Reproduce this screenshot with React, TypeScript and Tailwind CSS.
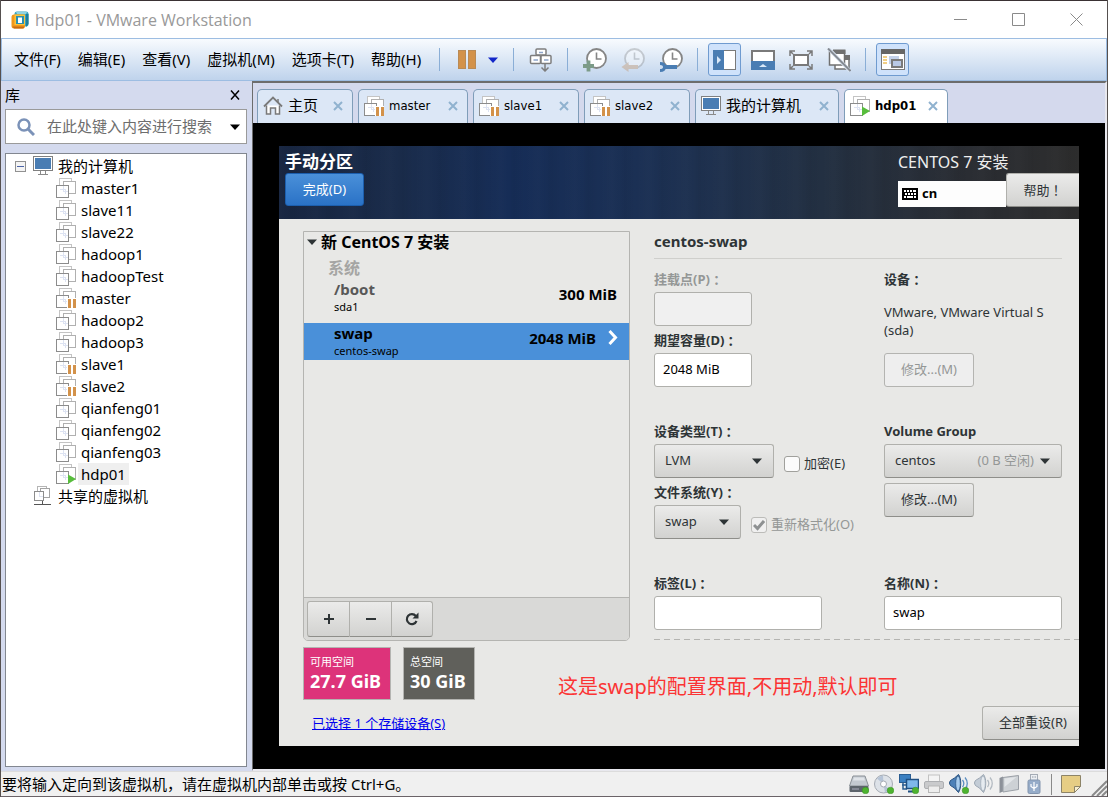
import type { ReactNode } from 'react';

type VmState = 'off' | 'paused' | 'running';

const menus = ['文件(F)', '编辑(E)', '查看(V)', '虚拟机(M)', '选项卡(T)', '帮助(H)'];

const machines: { name: string; state: VmState }[] = [
  { name: 'master1', state: 'off' },
  { name: 'slave11', state: 'off' },
  { name: 'slave22', state: 'off' },
  { name: 'hadoop1', state: 'off' },
  { name: 'hadoopTest', state: 'off' },
  { name: 'master', state: 'paused' },
  { name: 'hadoop2', state: 'off' },
  { name: 'hadoop3', state: 'off' },
  { name: 'slave1', state: 'paused' },
  { name: 'slave2', state: 'paused' },
  { name: 'qianfeng01', state: 'off' },
  { name: 'qianfeng02', state: 'off' },
  { name: 'qianfeng03', state: 'off' },
  { name: 'hdp01', state: 'running' },
];

/* ---------- icons ---------- */

function VmwareLogo() {
  return (
    <svg width="18" height="18" viewBox="0 0 18 18" fill="none">
      <rect x="3.5" y="0.5" width="14" height="15" rx="2.5" fill="#3aa3bd" />
      <path d="M5 1h11l-1 2H6z" fill="#8fd3e2" />
      <path d="M15 3h2.500v10l-2.500 3z" fill="#1f7d9c" />
      <rect x="0.500" y="3.500" width="13.500" height="14" rx="2.500" fill="#f0981c" />
      <path d="M1.500 15.500h12l-1 2H3z" fill="#c76a12" />
      <rect x="3.500" y="3.500" width="10.500" height="10.500" fill="#fbc23a" />
      <rect x="5" y="5" width="8" height="8" fill="#2a8fae" />
      <rect x="7" y="6.500" width="4" height="5.500" fill="#fff" />
    </svg>
  );
}

function VmIcon({ state }: { state: VmState }) {
  return (
    <svg width="20" height="20" viewBox="0 0 20 20" fill="none" shapeRendering="crispEdges">
      <rect x="3.500" y="0.500" width="12" height="12" fill="#fff" stroke="#c4c4c4" />
      <rect x="7.500" y="3.500" width="12" height="12" fill="#fff" stroke="#b0b0b0" />
      <rect x="0.500" y="7.500" width="12" height="12" fill="#fff" stroke="#8c8c8c" />
      <path d="M7.500 8v5.500H12M4 11.500h5.500V16" stroke="#dde3f2" />
      {state === 'paused' && (
        <>
          <rect x="11" y="10" width="9" height="10" fill="#fff" />
          <path d="M12 11h3v9h-3zM17 11h3v9h-3z" fill="#d3924a" />
        </>
      )}
      {state === 'running' && (
        <path d="M12 10.500l8 4.500-8 5z" fill="#57bd3c" shapeRendering="auto" />
      )}
    </svg>
  );
}

function MonitorIcon() {
  return (
    <svg width="20" height="20" viewBox="0 0 20 20" fill="none" shapeRendering="crispEdges">
      <rect x="0.500" y="0.500" width="19" height="14" fill="#fff" stroke="#808080" />
      <rect x="2" y="2" width="16" height="11" fill="#4a7db3" />
      <path d="M7.500 15v3M12.500 15v3M5 18.500h10" stroke="#8a8a8a" />
    </svg>
  );
}

function SharedIcon() {
  return (
    <svg width="20" height="20" viewBox="0 0 20 20" fill="none" shapeRendering="crispEdges">
      <rect x="4.500" y="0.500" width="9" height="9" fill="#fff" stroke="#b5b5b5" />
      <rect x="7.500" y="2.500" width="9" height="9" fill="#fff" stroke="#a3a3a3" />
      <rect x="1.500" y="5.500" width="9" height="9" fill="#fff" stroke="#8c8c8c" />
      <path d="M6.500 6v4H10" stroke="#dde3f2" />
      <path d="M9.500 15v3M1 18.500h17" stroke="#555" />
    </svg>
  );
}

function HomeIcon() {
  return (
    <svg width="20" height="20" viewBox="0 0 20 20" fill="none" stroke="#7a7a7a" strokeWidth="1.500">
      <path d="M3.500 9.500V18h4v-6h5v6h4V9.500" fill="#fff" />
      <path d="M1 10.500L10 1.500l9 9" strokeWidth="1.800" />
      <path d="M15 3v3" />
    </svg>
  );
}

function CloseIcon({ className }: { className: string }) {
  return (
    <svg width="10" height="10" viewBox="0 0 10 10" fill="none" className={className}>
      <path d="M1 1l8 8M9 1L1 9" stroke="currentColor" strokeWidth="2" />
    </svg>
  );
}

function Caret({ className = '' }: { className?: string }) {
  return (
    <svg width="10" height="6" viewBox="0 0 10 6" className={className}>
      <path d="M0 0.500h10L5 6z" fill="currentColor" />
    </svg>
  );
}

function KeysIcon() {
  return (
    <svg width="24" height="24" viewBox="0 0 24 24" fill="none" stroke="#7d7d7d" strokeWidth="1.500">
      <rect x="7" y="1" width="10" height="6" rx="1" fill="#fff" />
      <rect x="1.500" y="7.500" width="10" height="8" rx="1" fill="#fff" />
      <rect x="12" y="7.500" width="10" height="8" rx="1" fill="#fff" />
      <path d="M10 4.500h4M4.500 12h4.500M15 12h4.500" stroke="#8fa6cc" />
      <path d="M16 15.500V22M12.500 19.500l3.500 3.500 3.500-3.500" />
    </svg>
  );
}

function ClockIcon({ badge }: { badge: 'add' | 'back' | 'manage' }) {
  return (
    <svg width="24" height="24" viewBox="0 0 24 24" fill="none" opacity={badge === 'back' ? 0.350 : 1}>
      <circle cx="13.500" cy="10.500" r="9.500" fill="#fff" stroke="#858585" strokeWidth="1.800" />
      <path d="M13.500 4.500V11H18.500" stroke="#858585" strokeWidth="1.600" />
      {badge === 'add' && <path d="M5.500 12.500v11M0 18h11" stroke="#7c9b88" strokeWidth="3.800" />}
      {badge === 'back' && <path d="M0.500 19l7-5v3H17v4H7.500v3z" fill="#c08a58" />}
      {badge === 'manage' && (
        <>
          <path d="M4 19h14" stroke="#4a7db3" strokeWidth="4" />
          <path d="M1 15.500c3 0 4.500 1.500 4.500 3.500s-1.500 3.500-4.500 3.500" stroke="#4a7db3" strokeWidth="3" />
        </>
      )}
    </svg>
  );
}

function SidebarViewIcon() {
  return (
    <svg width="24" height="20" viewBox="0 0 24 20" shapeRendering="crispEdges">
      <rect x="0.500" y="0.500" width="22" height="19" fill="#fff" stroke="#7a7a7a" />
      <rect x="0" y="0" width="11" height="20" fill="#4a7db3" />
      <path d="M4 6l4 4-4 4z" fill="#dbe9f8" shapeRendering="auto" />
    </svg>
  );
}

function BottomViewIcon() {
  return (
    <svg width="24" height="20" viewBox="0 0 24 20" shapeRendering="crispEdges">
      <rect x="1" y="1" width="22" height="18" fill="#fff" stroke="#7a7a7a" strokeWidth="1.500" />
      <rect x="0" y="11" width="24" height="9" fill="#4a7db3" />
      <path d="M8 17l4-3 4 3z" fill="#dbe9f8" shapeRendering="auto" />
    </svg>
  );
}

function FullscreenIcon() {
  return (
    <svg width="24" height="20" viewBox="0 0 24 20" fill="none" stroke="#7a7a7a" strokeWidth="1.500">
      <rect x="5" y="5" width="14" height="10" fill="#fff" strokeWidth="2" />
      <path d="M1 6V1h5M1 1l3 3M23 6V1h-5M23 1l-3 3M1 14v5h5M1 19l3-3M23 14v5h-5M23 19l-3-3" />
    </svg>
  );
}

function UnityIcon() {
  return (
    <svg width="24" height="24" viewBox="0 0 24 24" fill="none">
      <rect x="8" y="8" width="14" height="13" fill="#fff" stroke="#707070" strokeWidth="1.500" />
      <path d="M18 7h5v5h-5z" fill="#707070" />
      <rect x="2.500" y="3" width="15" height="14" fill="#fff" stroke="#707070" strokeWidth="1.500" />
      <path d="M6 1.500h12.500V6H6z" fill="#707070" />
      <path d="M1.500 0.500l21.500 22.500" stroke="#dbe6f4" strokeWidth="3.500" />
      <path d="M1 0.500l22.500 22.500" stroke="#868b92" strokeWidth="2" />
    </svg>
  );
}

function ConsoleIcon() {
  return (
    <svg width="24" height="22" viewBox="0 0 24 22" shapeRendering="crispEdges">
      <rect x="0.500" y="0.500" width="23" height="20" fill="#fff" stroke="#7a7a7a" />
      <rect x="0" y="0" width="24" height="5" fill="#666" />
      <path d="M2 7h4v2H2zM2 10h4v2H2zM2 13h4v2H2z" fill="#f1cf86" />
      <rect x="8" y="7" width="10" height="8" fill="#c3d1ea" />
      <rect x="11" y="11" width="10" height="7" fill="#b9c9e6" stroke="#7a7a7a" strokeWidth="2" />
    </svg>
  );
}

function KeyboardIcon() {
  return (
    <svg width="16" height="12" viewBox="0 0 16 12" shapeRendering="crispEdges">
      <rect width="16" height="12" rx="1" fill="#000" />
      <path
        d="M2 2h2v2H2zM5 2h2v2H5zM8 2h2v2H8zM11 2h3v2h-3zM3 5h2v2H3zM6 5h2v2H6zM9 5h2v2H9zM12 5h2v2h-2zM2 8h2v2H2zM5 8h6v2H5zM12 8h2v2h-2z"
        fill="#fff"
      />
    </svg>
  );
}

/* status bar devices, all on the same 20px grid */

const greenDot = <circle cx="16.500" cy="16.500" r="3.300" fill="#4db32f" stroke="#3b8f24" strokeWidth="0.500" />;

const devices: { label: string; art: ReactNode }[] = [
  {
    label: '硬盘',
    art: (
      <>
        <path d="M4 2h12l3.500 10H0.500z" fill="#c3c9d0" stroke="#8b9197" />
        <path d="M5 3.500h10l1 3H4z" fill="#dfe3e8" />
        <rect x="0.500" y="12" width="19" height="6" rx="1" fill="#5d646c" />
        <path d="M3 15h7" stroke="#aab" />
        {greenDot}
      </>
    ),
  },
  {
    label: 'CD/DVD',
    art: (
      <>
        <circle cx="9.500" cy="10" r="9" fill="#dde2e8" stroke="#a5abb3" />
        <path d="M9.500 10L3 4.500A9 9 0 019 1.500zM9.500 10l6.500 6-5 2.500z" fill="#b5c3d6" />
        <circle cx="9.500" cy="10" r="3" fill="#fff" stroke="#a5abb3" />
        {greenDot}
      </>
    ),
  },
  {
    label: '网络适配器',
    art: (
      <>
        <rect x="0.500" y="0.500" width="11" height="8" fill="#3b7fc0" stroke="#2a5d91" />
        <path d="M3 11h5M4 9v6h4" stroke="#2a5d91" strokeWidth="1.500" fill="none" />
        <rect x="7.500" y="5.500" width="12" height="9" fill="#7fb8ea" stroke="#1f4f82" strokeWidth="1.500" />
        <path d="M9 17.500h6" stroke="#1f4f82" strokeWidth="2" />
        {greenDot}
      </>
    ),
  },
  {
    label: '打印机',
    art: (
      <>
        <rect x="4.500" y="1" width="11" height="7" fill="#f4f4f4" stroke="#c2c2c2" />
        <rect x="0.500" y="7.500" width="19" height="7" rx="1.500" fill="#c9cacc" stroke="#adafb2" />
        <rect x="4.500" y="12" width="11" height="6.500" fill="#ededed" stroke="#b7b7b7" />
      </>
    ),
  },
  {
    label: '声卡',
    art: (
      <>
        <path d="M0.500 9c0-3 3-3.500 5-5l4-3.500c3 4 3 13 0 18L5.500 14c-2-1.500-5-2-5-5z" fill="#4d81b8" stroke="#27507f" />
        <ellipse cx="9" cy="9.500" rx="2.300" ry="7.500" fill="#a9cdee" stroke="#27507f" strokeWidth="0.700" />
        <path d="M13.500 6c1.500 2 1.500 5 0 7M16 3.500c3 3.500 3 8.500 0 12" stroke="#5c8fc2" strokeWidth="1.300" fill="none" />
        {greenDot}
      </>
    ),
  },
  {
    label: '音频',
    art: (
      <>
        <path d="M0.500 9c0-3 3-3.500 5-5l4-3.500c3 4 3 13 0 18L5.500 14c-2-1.500-5-2-5-5z" fill="#c3ccd6" stroke="#9aa5b1" />
        <ellipse cx="9" cy="9.500" rx="2.300" ry="7.500" fill="#e6ebf0" stroke="#9aa5b1" strokeWidth="0.700" />
        <path d="M13.500 6c1.500 2 1.500 5 0 7M16 3.500c3 3.500 3 8.500 0 12" stroke="#b3bac2" strokeWidth="1.300" fill="none" />
      </>
    ),
  },
  {
    label: '显示器',
    art: (
      <>
        <path d="M0.500 4l3.500-1.500v15L0.500 19z" fill="#8c9199" />
        <path d="M4 3.500L19.500 1.500v14L4 18z" fill="#cdd1d5" stroke="#9a9fa6" />
        <path d="M5.500 4.500l12-1.500L5.500 13z" fill="#e2e5e8" />
      </>
    ),
  },
  {
    label: 'USB',
    art: (
      <>
        <rect x="6.500" y="0.500" width="7" height="6" fill="#eceff3" stroke="#a4abb5" />
        <path d="M8 3h1.500M10.500 3H12" stroke="#8f97a2" />
        <rect x="4" y="6" width="12" height="13.500" rx="1.500" fill="#96acc9" stroke="#8294ad" />
        <path d="M10 8v9M7 10v2.500l3 2M13 10v2.500l-3 2" stroke="#fff" strokeWidth="1.200" fill="none" />
      </>
    ),
  },
];

/* ---------- host window ---------- */

function TitleBar() {
  return (
    <header className="flex h-[38px] shrink-0 items-center bg-white border-t border-[#3a3234] pl-2.5 pr-0.5">
      <VmwareLogo />
      <h1 className="ml-1.5 flex-1 text-base text-[#999] font-['Open_Sans','Noto_Sans_CJK_SC',sans-serif]">
        hdp01 - VMware Workstation
      </h1>
      {[
        { label: '最小化', d: 'M0 6.500h13' },
        { label: '最大化', d: 'M0.500 0.500h12v12h-12z' },
        { label: '关闭', d: 'M0.500 0.500l12 12M12.500 0.500l-12 12' },
      ].map((b) => (
        <button key={b.label} aria-label={b.label} className="flex w-[58px] justify-center">
          <svg width="13" height="13" viewBox="0 0 13 13" fill="none">
            <path d={b.d} stroke="#8a8a8a" />
          </svg>
        </button>
      ))}
    </header>
  );
}

function ToolButton({ label, active = false, children }: { label: string; active?: boolean; children: ReactNode }) {
  return (
    <button
      aria-label={label}
      className={`flex h-[33px] w-[33px] shrink-0 items-center justify-center rounded-[3px] ${
        active ? 'border border-[#6f9bd0] bg-[#cfe2fb]' : ''
      }`}
    >
      {children}
    </button>
  );
}

function Divider() {
  return <div className="mx-2.5 h-[23px] w-px shrink-0 bg-[#8aaed6]" />;
}

function Toolbar() {
  return (
    <div className="flex h-[43px] shrink-0 items-center border border-[#9dbde2] bg-linear-to-b from-[#f8fbfe] to-[#bfd3ec]">
      <nav className="flex w-[427px] shrink-0 gap-[17px] pl-3 text-[15px] text-black">
        {menus.map((m) => (
          <button key={m} className="whitespace-nowrap">
            {m}
          </button>
        ))}
      </nav>
      <Divider />
      <ToolButton label="挂起">
        <svg width="18" height="19" viewBox="0 0 18 19" shapeRendering="crispEdges">
          <path d="M0.500 0.500h7v18h-7zM10.500 0.500h7v18h-7z" fill="#d3924a" stroke="#b98a55" />
        </svg>
      </ToolButton>
      <button aria-label="电源选项" className="flex w-5 justify-center text-[#1226c8]">
        <Caret />
      </button>
      <Divider />
      <ToolButton label="发送 Ctrl+Alt+Del">
        <KeysIcon />
      </ToolButton>
      <Divider />
      <div className="flex gap-[5px]">
        <ToolButton label="拍摄快照">
          <ClockIcon badge="add" />
        </ToolButton>
        <ToolButton label="恢复快照">
          <ClockIcon badge="back" />
        </ToolButton>
        <ToolButton label="管理快照">
          <ClockIcon badge="manage" />
        </ToolButton>
      </div>
      <Divider />
      <div className="flex gap-[5px]">
        <ToolButton label="显示库" active>
          <SidebarViewIcon />
        </ToolButton>
        <ToolButton label="显示缩略图">
          <BottomViewIcon />
        </ToolButton>
        <ToolButton label="全屏">
          <FullscreenIcon />
        </ToolButton>
        <ToolButton label="Unity">
          <UnityIcon />
        </ToolButton>
      </div>
      <Divider />
      <ToolButton label="控制台视图" active>
        <ConsoleIcon />
      </ToolButton>
    </div>
  );
}

function Library() {
  return (
    <aside className="flex w-[251px] shrink-0 flex-col bg-[#d4daee] pl-1 pr-[5px] pb-1 text-[15px] text-black">
      <div className="flex h-7 items-center justify-between pr-[7px]">
        <h2>库</h2>
        <button aria-label="关闭库">
          <svg width="10" height="10" viewBox="0 0 10 10" fill="none">
            <path d="M1 0.500l8 9M9 0.500l-8 9" stroke="#000" strokeWidth="1.500" />
          </svg>
        </button>
      </div>
      <label className="flex h-[35px] shrink-0 items-center border border-[#9a9a9a] bg-white pl-[11px] pr-1.5">
        <svg width="18" height="18" viewBox="0 0 18 18" fill="none" stroke="#7b92b8" strokeWidth="2.500">
          <circle cx="7" cy="7" r="5.500" />
          <path d="M11 11l6 6" strokeWidth="3" />
        </svg>
        <input
          aria-label="搜索库"
          placeholder="在此处键入内容进行搜索"
          className="ml-3 min-w-0 flex-1 outline-none placeholder:text-[#6d6d6d]"
        />
        <Caret />
      </label>
      <div className="mt-[9px] flex-1 border border-[#828790] bg-white pt-px">
        <div className="flex h-[22px] items-center pl-[9px]">
          <svg width="11" height="11" viewBox="0 0 11 11" fill="none" className="mr-[7px]" shapeRendering="crispEdges">
            <rect x="0.500" y="0.500" width="10" height="10" fill="#f4f4f4" stroke="#919191" />
            <path d="M2 5.500h7" stroke="#4b63a7" />
          </svg>
          <MonitorIcon />
          <span className="ml-[5px]">我的计算机</span>
        </div>
        <ul>
          {machines.map((m) => (
            <li key={m.name} className="flex h-[22px] items-center pl-[50px]">
              <VmIcon state={m.state} />
              <span className={`ml-0.5 px-[3px] leading-[22px] ${m.state === 'running' ? 'bg-[#efefef]' : ''}`}>
                {m.name}
              </span>
            </li>
          ))}
        </ul>
        <div className="flex h-[22px] items-center pl-[27px]">
          <SharedIcon />
          <span className="ml-[5px]">共享的虚拟机</span>
        </div>
      </div>
    </aside>
  );
}

const tabs: { title: string; icon: ReactNode; width: string; cjk?: boolean; active?: boolean }[] = [
  { title: '主页', icon: <HomeIcon />, width: 'w-24', cjk: true },
  { title: 'master', icon: <VmIcon state="paused" />, width: 'w-[110px]' },
  { title: 'slave1', icon: <VmIcon state="paused" />, width: 'w-[106px]' },
  { title: 'slave2', icon: <VmIcon state="paused" />, width: 'w-[106px]' },
  { title: '我的计算机', icon: <MonitorIcon />, width: 'w-36', cjk: true },
  { title: 'hdp01', icon: <VmIcon state="running" />, width: 'w-[104px]', active: true },
];

function TabStrip() {
  return (
    <div className="flex h-10 shrink-0 items-end gap-[5px] bg-[#d4d9ed] pl-1">
      {tabs.map((t) => (
        <div
          key={t.title}
          className={`flex h-[34px] shrink-0 items-center rounded-t-[5px] border border-b-0 border-[#7f9db9] pb-0.5 pl-[5px] pr-[9px] text-black ${t.width} ${
            t.active ? 'bg-white font-bold' : 'bg-[#dce7f6]'
          } ${t.cjk ? 'text-[15px]' : "text-[13px] font-['DejaVu_Sans_Condensed','Noto_Sans',sans-serif]"}`}
        >
          {t.icon}
          <span className="ml-[5px] flex-1 whitespace-nowrap">{t.title}</span>
          <button aria-label={`关闭 ${t.title}`}>
            <CloseIcon className="text-[#90b2cf]" />
          </button>
        </div>
      ))}
    </div>
  );
}

/* ---------- guest: installer screen ---------- */

const raised = 'border border-[#b0b0ac] border-b-[#8e8e8a] bg-linear-to-b from-[#ebebea] to-[#d2d2d0]';

// full-width punctuation that sits in the middle of its square
function Mark({ children }: { children: string }) {
  return <span className="font-['Noto_Sans_CJK_TC',sans-serif]">{children}</span>;
}

function Field({ label, id, dim = false, colon = true, children }: { label: string; id: string; dim?: boolean; colon?: boolean; children: ReactNode }) {
  return (
    <div>
      <label
        htmlFor={id}
        className={`flex h-[27px] items-center pt-0.5 text-[13px] font-bold ${dim ? 'text-[#949796]' : 'text-[#2e3436]'}`}
      >
        {label}
        {colon && <Mark>：</Mark>}
      </label>
      {children}
    </div>
  );
}

function Select({ id, value, width, note }: { id: string; value: string; width: string; note?: string }) {
  return (
    <div className={`relative ${width}`}>
      <select id={id} className={`h-[34px] w-full appearance-none rounded-[3px] pl-2.5 text-[13px] text-[#2e3436] ${raised}`}>
        <option>{value}</option>
      </select>
      <span className="pointer-events-none absolute inset-y-0 right-3 flex items-center gap-1.5 text-[#949796]">
        {note}
        <Caret className="text-[#2e3436]" />
      </span>
    </div>
  );
}

function CheckBox({ label, checked = false }: { label: string; checked?: boolean }) {
  return (
    <label className={`mt-1.5 flex items-center gap-1 whitespace-nowrap ${checked ? 'text-[#949796]' : 'text-[#2e3436]'}`}>
      <span className="relative flex">
        <input
          type="checkbox"
          defaultChecked={checked}
          disabled={checked}
          className={`h-4 w-4 appearance-none rounded-[3px] border ${
            checked ? 'border-[#bcbcb9] bg-[#f0f0f0]' : 'border-[#a0a09c] bg-[#fbfbfb]'
          }`}
        />
        {checked && (
          <svg width="12" height="12" viewBox="0 0 12 12" fill="none" className="pointer-events-none absolute left-0.5 top-0.5">
            <path d="M1 6l3.500 3.500L11 2" stroke="#8e9192" strokeWidth="3" />
          </svg>
        )}
      </span>
      {label}
    </label>
  );
}

const textBox = 'h-[34px] rounded-[3px] border border-[#b0b0ac] px-2 pb-0.5 text-[13px] text-black';

function InstallerHeader() {
  return (
    <div className="flex h-[73px] shrink-0 justify-between bg-[repeating-linear-gradient(90deg,rgba(255,255,255,0.01)_0px,rgba(255,255,255,0)_7px,rgba(0,0,0,0.04)_13px,rgba(255,255,255,0)_24px,rgba(255,255,255,0.01)_37px),linear-gradient(90deg,#182641_0%,#1a2c4b_15%,#162d57_29%,#1b3054_45%,#1e3150_52%,#233042_68%,#2a2d33_86%,#2d2d2d_100%)] pl-1.5">
      <div className="pt-1">
        <h2 className="text-[17px] leading-6 font-bold text-white">手动分区</h2>
        <button className="-mt-px h-[33px] w-[79px] rounded-[3px] border border-[#1c5fae] bg-linear-to-b from-[#4a90d9] to-[#2a72c6] text-white">
          完成(D)
        </button>
      </div>
      <div className="w-[181px] pt-1">
        <p className="text-base leading-6 text-[#eee]">CENTOS 7 安装</p>
        <div className="flex items-end">
          <div className="flex h-[26px] flex-1 items-center gap-1 bg-[#fdfdfd] pl-1 font-bold text-black">
            <KeyboardIcon />
            cn
          </div>
          <button className={`-mt-px h-[34px] w-[73px] rounded-l-[3px] border-r-0 text-[#2e3436] ${raised}`}>
            帮助<Mark>！</Mark>
          </button>
        </div>
      </div>
    </div>
  );
}

function MountName({ name, device, dim = false }: { name: string; device: string; dim?: boolean }) {
  return (
    <div>
      <div className={`text-[15px] leading-[18px] font-bold ${dim ? 'text-[#585858]' : ''}`}>{name}</div>
      <div className="text-[11px] leading-[18px]">{device}</div>
    </div>
  );
}

function MountList() {
  return (
    <section className="flex w-[327px] shrink-0 flex-col overflow-hidden rounded-b-[5px] border border-[#b4b4b1] text-base text-black">
      <h3 className="flex h-5 items-center gap-1 pl-[3px] font-bold">
        <Caret className="text-[#2e3436]" />
        新 CentOS 7 安装
      </h3>
      <p className="h-7 pl-6 pt-1 leading-6 font-bold text-[#a5a5a3]">系统</p>
      <div className="flex h-[43px] items-start justify-between pl-[30px] pr-3">
        <MountName name="/boot" device="sda1" dim />
        <span className="pt-1 text-[15px] leading-5 font-bold">300 MiB</span>
      </div>
      <div className="flex h-[37px] items-start bg-[#4a90d9] pl-[30px] pr-[11px] pt-px">
        <div className="flex-1">
          <MountName name="swap" device="centos-swap" />
        </div>
        <span className="pt-1 text-[15px] leading-5 font-bold">2048 MiB</span>
        <svg width="10" height="15" viewBox="0 0 10 15" fill="none" className="ml-3 mt-1.5">
          <path d="M1.500 1l6 6.500-6 6.500" stroke="#fff" strokeWidth="3" />
        </svg>
      </div>
      <div className="mt-auto flex h-[43px] items-center border-t border-[#b4b4b1] bg-[#d9d9d7] pl-[3px]">
        <div className="flex">
          <button aria-label="添加" className={`flex h-9 w-[43px] items-center justify-center rounded-l-[3px] ${raised}`}>
            <svg width="12" height="12" viewBox="0 0 12 12">
              <path d="M5 1h2v4h4v2H7v4H5V7H1V5h4z" fill="#2e3436" />
            </svg>
          </button>
          <button aria-label="删除" className={`flex h-9 w-[42px] items-center justify-center border-l-0 ${raised}`}>
            <svg width="12" height="12" viewBox="0 0 12 12">
              <path d="M1 5h10v2H1z" fill="#2e3436" />
            </svg>
          </button>
          <button aria-label="刷新" className={`flex h-9 w-[41px] items-center justify-center rounded-r-[3px] border-l-0 ${raised}`}>
            <svg width="14" height="14" viewBox="0 0 14 14" fill="none">
              <path d="M10.800 4A5 5 0 1011.500 9" stroke="#2e3436" strokeWidth="2.200" />
              <path d="M13.500 0.500v6h-6z" fill="#2e3436" />
            </svg>
          </button>
        </div>
      </div>
    </section>
  );
}

function MountDetails() {
  return (
    <form className="flex min-w-0 flex-1 flex-col">
      <h3 className="mr-[17px] flex h-7 items-center border-b border-[#cfcfcc] pb-1.5 text-[15px] font-bold text-[#2e3436]">
        centos-swap
      </h3>
      <div className="mr-[17px] mt-1.5 grid grid-cols-[230px_1fr] gap-y-[30px]">
        <div>
          <Field label="挂载点(P)" id="mount" dim>
            <input id="mount" disabled className={`w-[98px] bg-[#f0f0f0] ${textBox}`} />
          </Field>
          <Field label="期望容量(D)" id="size">
            <input id="size" defaultValue="2048 MiB" className={`w-[98px] bg-white ${textBox}`} />
          </Field>
        </div>
        <div className="flex flex-col items-start justify-between text-[#2e3436]">
          <h4 className="flex h-[27px] items-center pt-0.5 font-bold">
            设备<Mark>：</Mark>
          </h4>
          <p className="pb-1 leading-[18px]">
            VMware, VMware Virtual S
            <br />
            (sda)
          </p>
          <button type="button" disabled className="h-[34px] w-[90px] rounded-[3px] border border-[#b4b4b1] bg-[#eeeeee] text-[#949796]">
            修改...(M)
          </button>
        </div>

        <div>
          <Field label="设备类型(T)" id="devtype">
            <div className="flex items-center gap-2.5">
              <Select id="devtype" value="LVM" width="w-[120px]" />
              <CheckBox label="加密(E)" />
            </div>
          </Field>
          <Field label="文件系统(Y)" id="fs">
            <div className="flex items-center gap-2.5">
              <Select id="fs" value="swap" width="w-[87px]" />
              <CheckBox label="重新格式化(O)" checked />
            </div>
          </Field>
        </div>
        <div>
          <Field label="Volume Group" id="vg" colon={false}>
            <Select id="vg" value="centos" width="w-full" note="(0 B 空闲)" />
          </Field>
          <button type="button" className={`mt-[5px] h-[34px] w-[90px] rounded-[3px] text-[#2e3436] ${raised}`}>
            修改...(M)
          </button>
        </div>

        <Field label="标签(L)" id="label">
          <input id="label" className={`w-[168px] bg-white ${textBox}`} />
        </Field>
        <Field label="名称(N)" id="name">
          <input id="name" defaultValue="swap" className={`w-full bg-white ${textBox}`} />
        </Field>
      </div>
      <div className="mb-px mt-auto h-px bg-[repeating-linear-gradient(90deg,#b4b4b1_0px,#b4b4b1_6px,transparent_6px,transparent_10px)]" />
    </form>
  );
}

function SpaceCard({ title, value, tone }: { title: string; value: string; tone: string }) {
  return (
    <div className={`flex h-[53px] flex-col justify-center border border-[#b4b4b1] px-1.5 pb-0.5 text-white ${tone}`}>
      <span className="text-[11px] leading-4">{title}</span>
      <strong className="whitespace-nowrap text-lg leading-[22px]">{value}</strong>
    </div>
  );
}

function Installer() {
  return (
    <div className="flex flex-1 flex-col bg-[#e8e8e6] text-[13px] font-['Noto_Sans','Noto_Sans_CJK_SC',sans-serif]">
      <InstallerHeader />
      <div className="flex flex-1 gap-6 pl-6 pt-3">
        <MountList />
        <MountDetails />
      </div>
      <div className="flex h-[105px] shrink-0 pl-6">
        <div className="w-[255px] shrink-0 pt-1.5">
          <div className="flex gap-3">
            <SpaceCard title="可用空间" value="27.7 GiB" tone="w-[88px] bg-[#dd337a]" />
            <SpaceCard title="总空间" value="30 GiB" tone="w-[72px] bg-[#60605b]" />
          </div>
          <a href="#devices" className="ml-[9px] mt-3.5 block text-[#0000ee] underline">
            已选择 1 个存储设备(S)
          </a>
        </div>
        <p className="pt-8 text-xl leading-7 whitespace-nowrap text-[#fb3434]">这是swap的配置界面,不用动,默认即可</p>
        <button className={`mb-1.5 ml-auto h-[34px] w-[97px] self-end rounded-l-[3px] border-r-0 pl-1 text-[#2e3436] ${raised}`}>
          全部重设(R)
        </button>
      </div>
    </div>
  );
}

function StatusBar() {
  return (
    <footer className="flex h-[26px] shrink-0 items-center border-t border-b border-t-[#dcdcdc] border-b-[#6b6368] bg-[#f0f0f0] pl-px text-[15px] text-black">
      <p className="flex-1 whitespace-nowrap">要将输入定向到该虚拟机，请在虚拟机内部单击或按 Ctrl+G。</p>
      <div className="flex gap-[5px]">
        {devices.map((d) => (
          <button key={d.label} aria-label={d.label}>
            <svg width="20" height="20" viewBox="0 0 20 20" fill="none">
              {d.art}
            </svg>
          </button>
        ))}
      </div>
      <div className="ml-[7px] mr-[9px] h-[21px] w-px bg-[#8a8a8a]" />
      <button aria-label="消息">
        <svg width="20" height="18" viewBox="0 0 20 18">
          <path d="M0.500 0.500h19v11l-6 6H0.500z" fill="#e6cd84" stroke="#8d8468" />
          <path d="M13.500 17.500v-6h6z" fill="#f8efcf" stroke="#8d8468" />
        </svg>
      </button>
      <svg width="16" height="16" viewBox="0 0 16 16" className="ml-2.5 self-end">
        <path d="M1 16L16 1M6 16L16 6M11 16l5-5" stroke="#8b8b8b" strokeWidth="2" />
      </svg>
    </footer>
  );
}

export default function App() {
  return (
    <div className="flex min-h-screen flex-col border-x border-[#55504f] bg-[#f0f0f0] font-['Noto_Sans','Noto_Sans_CJK_SC',sans-serif]">
      <TitleBar />
      <Toolbar />
      <main className="flex flex-1">
        <Library />
        <div className="flex min-w-0 flex-1 flex-col border-2 border-l border-[#e8e8ee] border-t-[#6c6c6c] border-l-[#6c6c6c]">
          <TabStrip />
          <div className="flex flex-1 bg-black px-[26px] py-[23px]">
            <Installer />
          </div>
        </div>
      </main>
      <StatusBar />
    </div>
  );
}
